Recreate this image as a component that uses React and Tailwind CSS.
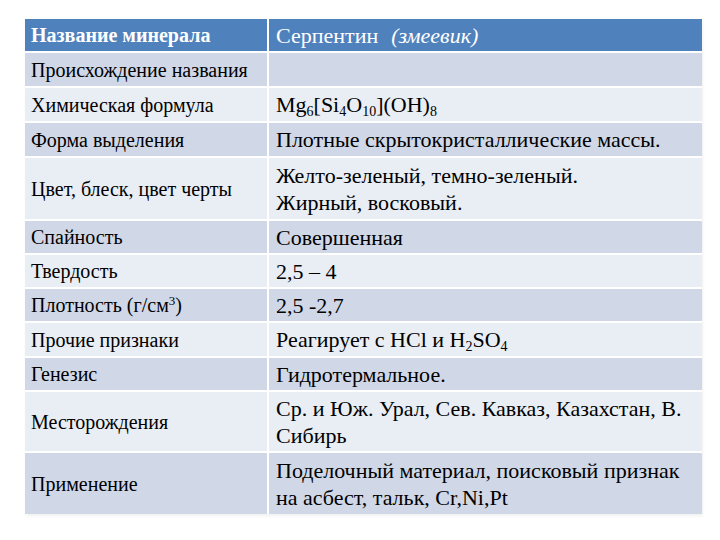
import React from "react";

const Sub = ({ children }) => <sub className="text-[14px] -bottom-[0.3em]">{children}</sub>;

const rows = [
  { label: "Происхождение названия", value: null, h: "h-[33px]", dark: true },
  {
    label: "Химическая формула",
    value: (
      <>
        Mg<Sub>6</Sub>[Si<Sub>4</Sub>O<Sub>10</Sub>](OH)<Sub>8</Sub>
      </>
    ),
    h: "h-[33px]",
    dark: false,
  },
  { label: "Форма выделения", value: "Плотные скрытокристаллические массы.", h: "h-[33px]", dark: true },
  {
    label: "Цвет, блеск, цвет черты",
    value: (
      <>
        Желто-зеленый, темно-зеленый.
        <br />
        Жирный, восковый.
      </>
    ),
    h: "h-[61px]",
    dark: false,
  },
  { label: "Спайность", value: "Совершенная", h: "h-[32px]", dark: true },
  { label: "Твердость", value: "2,5 – 4", h: "h-[32px]", dark: false },
  {
    label: (
      <>
        Плотность (г/см<sup className="text-[13px] -top-[0.55em]">3</sup>)
      </>
    ),
    value: "2,5 -2,7",
    h: "h-[32px]",
    dark: true,
  },
  {
    label: "Прочие признаки",
    value: (
      <>
        Реагирует с HCl и H<Sub>2</Sub>SO<Sub>4</Sub>
      </>
    ),
    h: "h-[33px]",
    dark: false,
  },
  { label: "Генезис", value: "Гидротермальное.", h: "h-[32px]", dark: true },
  {
    label: "Месторождения",
    value: (
      <>
        Ср. и Юж. Урал, Сев. Кавказ, Казахстан, В.
        <br />
        Сибирь
      </>
    ),
    h: "h-[59px]",
    dark: false,
  },
  {
    label: "Применение",
    value: (
      <>
        Поделочный материал, поисковый признак
        <br />
        на асбест, тальк, Cr,Ni,Pt
      </>
    ),
    h: "h-[61px]",
    dark: true,
  },
];

export default function App() {
  return (
    <div className="w-[720px] h-[540px] bg-white pt-[19px] pl-[25px] [font-family:'Liberation_Serif','DejaVu_Serif',serif] text-black">
      <div className="w-[677px] flex flex-col gap-[2px] bg-white shadow-[1px_2px_3px_rgba(0,0,0,0.06)]">
        <div className="flex gap-[2px] h-[32px]">
          <div className="w-[242px] bg-[#4f81bd] flex items-center pl-[6px] text-white font-bold text-[20px]">
            Название минерала
          </div>
          <div className="flex-1 bg-[#4f81bd] flex items-center pl-[7px] text-white text-[22px]">
            Серпентин
            <span className="italic ml-[13px]">(змеевик)</span>
          </div>
        </div>
        {rows.map((r, i) => (
          <div key={i} className={`flex gap-[2px] ${r.h}`}>
            <div
              className={`w-[242px] flex items-center pl-[6px] text-[20px] ${
                r.dark ? "bg-[#d0d8e8]" : "bg-[#e9edf4]"
              }`}
            >
              <span>{r.label}</span>
            </div>
            <div
              className={`flex-1 flex items-center pl-[7px] text-[22px] leading-[27px] ${
                r.dark ? "bg-[#d0d8e8]" : "bg-[#e9edf4]"
              }`}
            >
              <span>{r.value}</span>
            </div>
          </div>
        ))}
      </div>
    </div>
  );
}
